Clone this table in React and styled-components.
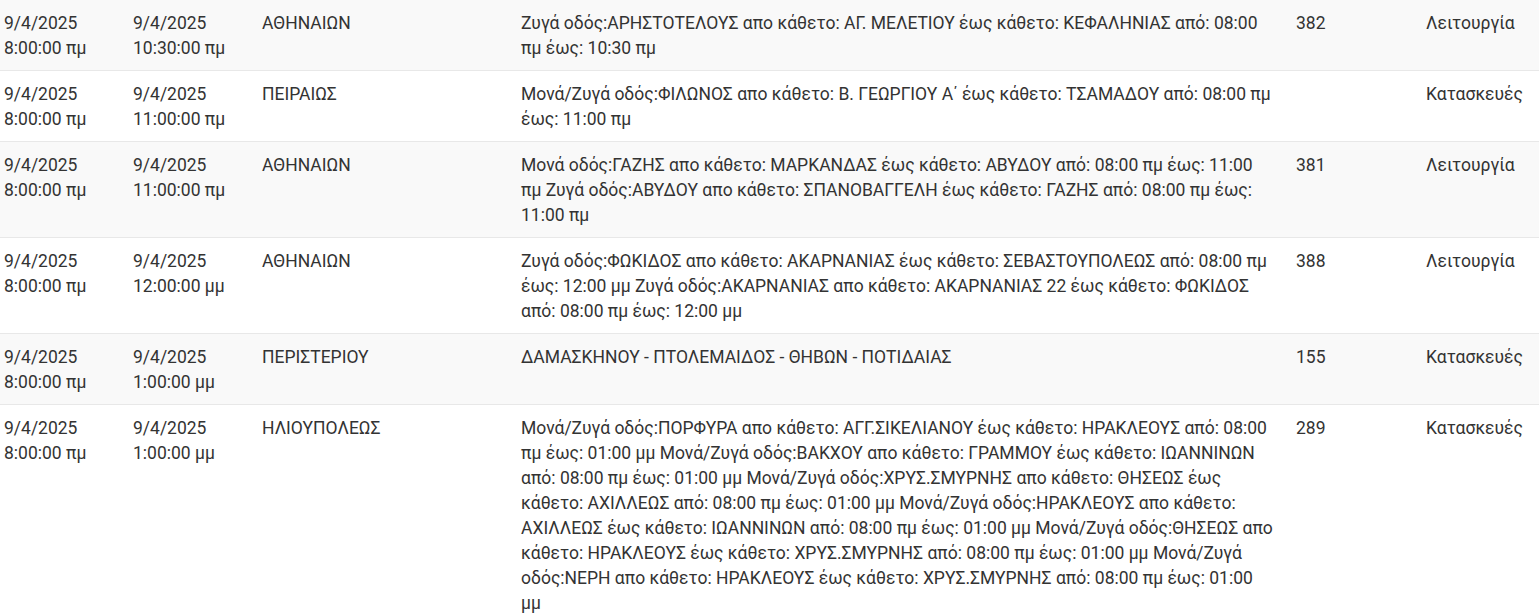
import React from "react";
import styled, { createGlobalStyle } from "styled-components";

const GlobalStyle = createGlobalStyle`
  body {
    margin: 0;
    background: #fff;
    font-family: Roboto, "Noto Sans", sans-serif;
  }
`;

const Table = styled.table`
  width: 1539px;
  border-collapse: collapse;
  table-layout: fixed;
  font-size: 17.5px;
  line-height: 25px;
  color: #333;
`;

const Col = styled.col`
  width: ${(p) => p.$w}px;
`;

const Row = styled.tr`
  background: ${(p) => (p.$striped ? "#f9f9f9" : "#fff")};
  border-top: ${(p) => (p.$first ? "none" : "1px solid #e8e8e8")};
`;

const Cell = styled.td`
  padding: 11px 4px 9px;
  vertical-align: top;
  text-align: left;
`;

const DescCell = styled(Cell)`
  padding-right: 17px;
`;

const widths = [129, 129, 259, 775, 130, 117];

const rows = [
  {
    from: ["9/4/2025", "8:00:00 πμ"],
    to: ["9/4/2025", "10:30:00 πμ"],
    area: "ΑΘΗΝΑΙΩΝ",
    desc: "Ζυγά οδός:ΑΡΗΣΤΟΤΕΛΟΥΣ απο κάθετο: ΑΓ. ΜΕΛΕΤΙΟΥ έως κάθετο: ΚΕΦΑΛΗΝΙΑΣ από: 08:00 πμ έως: 10:30 πμ",
    code: "382",
    type: "Λειτουργία",
  },
  {
    from: ["9/4/2025", "8:00:00 πμ"],
    to: ["9/4/2025", "11:00:00 πμ"],
    area: "ΠΕΙΡΑΙΩΣ",
    desc: "Μονά/Ζυγά οδός:ΦΙΛΩΝΟΣ απο κάθετο: Β. ΓΕΩΡΓΙΟΥ Α΄ έως κάθετο: ΤΣΑΜΑΔΟΥ από: 08:00 πμ έως: 11:00 πμ",
    code: "",
    type: "Κατασκευές",
  },
  {
    from: ["9/4/2025", "8:00:00 πμ"],
    to: ["9/4/2025", "11:00:00 πμ"],
    area: "ΑΘΗΝΑΙΩΝ",
    desc: "Μονά οδός:ΓΑΖΗΣ απο κάθετο: ΜΑΡΚΑΝΔΑΣ έως κάθετο: ΑΒΥΔΟΥ από: 08:00 πμ έως: 11:00 πμ Ζυγά οδός:ΑΒΥΔΟΥ απο κάθετο: ΣΠΑΝΟΒΑΓΓΕΛΗ έως κάθετο: ΓΑΖΗΣ από: 08:00 πμ έως: 11:00 πμ",
    code: "381",
    type: "Λειτουργία",
  },
  {
    from: ["9/4/2025", "8:00:00 πμ"],
    to: ["9/4/2025", "12:00:00 μμ"],
    area: "ΑΘΗΝΑΙΩΝ",
    desc: "Ζυγά οδός:ΦΩΚΙΔΟΣ απο κάθετο: ΑΚΑΡΝΑΝΙΑΣ έως κάθετο: ΣΕΒΑΣΤΟΥΠΟΛΕΩΣ από: 08:00 πμ έως: 12:00 μμ Ζυγά οδός:ΑΚΑΡΝΑΝΙΑΣ απο κάθετο: ΑΚΑΡΝΑΝΙΑΣ 22 έως κάθετο: ΦΩΚΙΔΟΣ από: 08:00 πμ έως: 12:00 μμ",
    code: "388",
    type: "Λειτουργία",
  },
  {
    from: ["9/4/2025", "8:00:00 πμ"],
    to: ["9/4/2025", "1:00:00 μμ"],
    area: "ΠΕΡΙΣΤΕΡΙΟΥ",
    desc: "ΔΑΜΑΣΚΗΝΟΥ - ΠΤΟΛΕΜΑΙΔΟΣ - ΘΗΒΩΝ - ΠΟΤΙΔΑΙΑΣ",
    code: "155",
    type: "Κατασκευές",
  },
  {
    from: ["9/4/2025", "8:00:00 πμ"],
    to: ["9/4/2025", "1:00:00 μμ"],
    area: "ΗΛΙΟΥΠΟΛΕΩΣ",
    desc: "Μονά/Ζυγά οδός:ΠΟΡΦΥΡΑ απο κάθετο: ΑΓΓ.ΣΙΚΕΛΙΑΝΟΥ έως κάθετο: ΗΡΑΚΛΕΟΥΣ από: 08:00 πμ έως: 01:00 μμ Μονά/Ζυγά οδός:ΒΑΚΧΟΥ απο κάθετο: ΓΡΑΜΜΟΥ έως κάθετο: ΙΩΑΝΝΙΝΩΝ από: 08:00 πμ έως: 01:00 μμ Μονά/Ζυγά οδός:ΧΡΥΣ.ΣΜΥΡΝΗΣ απο κάθετο: ΘΗΣΕΩΣ έως κάθετο: ΑΧΙΛΛΕΩΣ από: 08:00 πμ έως: 01:00 μμ Μονά/Ζυγά οδός:ΗΡΑΚΛΕΟΥΣ απο κάθετο: ΑΧΙΛΛΕΩΣ έως κάθετο: ΙΩΑΝΝΙΝΩΝ από: 08:00 πμ έως: 01:00 μμ Μονά/Ζυγά οδός:ΘΗΣΕΩΣ απο κάθετο: ΗΡΑΚΛΕΟΥΣ έως κάθετο: ΧΡΥΣ.ΣΜΥΡΝΗΣ από: 08:00 πμ έως: 01:00 μμ Μονά/Ζυγά οδός:ΝΕΡΗ απο κάθετο: ΗΡΑΚΛΕΟΥΣ έως κάθετο: ΧΡΥΣ.ΣΜΥΡΝΗΣ από: 08:00 πμ έως: 01:00 μμ",
    code: "289",
    type: "Κατασκευές",
  },
];

const DateTime = ({ value }) => (
  <>
    {value[0]}
    <br />
    {value[1]}
  </>
);

export default function App() {
  return (
    <>
      <GlobalStyle />
      <Table>
        <colgroup>
          {widths.map((w, i) => (
            <Col key={i} $w={w} />
          ))}
        </colgroup>
        <tbody>
          {rows.map((r, i) => (
            <Row key={i} $striped={i % 2 === 0} $first={i === 0}>
              <Cell>
                <DateTime value={r.from} />
              </Cell>
              <Cell>
                <DateTime value={r.to} />
              </Cell>
              <Cell>{r.area}</Cell>
              <DescCell>{r.desc}</DescCell>
              <Cell>{r.code}</Cell>
              <Cell>{r.type}</Cell>
            </Row>
          ))}
        </tbody>
      </Table>
    </>
  );
}
